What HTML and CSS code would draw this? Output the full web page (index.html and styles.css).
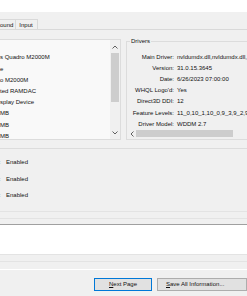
FILE: index.html
```html
<!DOCTYPE html>
<html lang="en">
<head>
  <meta charset="UTF-8">
  <meta name="viewport" content="width=device-width, initial-scale=1.0">
  <title>DirectX Diagnostic Tool</title>
  <link rel="stylesheet" href="styles.css">
</head>
<body>
  <div class="band"></div>

  <div class="tabs">
    <div class="tab first">ound</div>
    <div class="tab">Input</div>
  </div>

  <div class="page">
    <div class="top">
      <div class="device">
        <div class="lines">
          <div>s Quadro M2000M</div>
          <div>e</div>
          <div>o M2000M</div>
          <div>ted RAMDAC</div>
          <div>splay Device</div>
          <div>MB</div>
          <div>MB</div>
          <div>MB</div>
        </div>
        <div class="vscroll">
          <div class="arrow"><svg width="6" height="4" viewBox="0 0 6 4"><polyline points="0.5,3.5 3,1 5.5,3.5" fill="none" stroke="#606060" stroke-width="1"/></svg></div>
          <div class="thumb"></div>
          <div class="arrow down"><svg width="6" height="4" viewBox="0 0 6 4"><polyline points="0.5,0.5 3,3 5.5,0.5" fill="none" stroke="#606060" stroke-width="1"/></svg></div>
        </div>
      </div>

      <fieldset class="drivers">
        <legend>Drivers</legend>
        <div class="drv-grid">
          <span class="k">Main Driver:</span><span>nvldumdx.dll,nvldumdx.dll,</span>
          <span class="k">Version:</span><span>31.0.15.3645</span>
          <span class="k">Date:</span><span>6/26/2023 07:00:00</span>
          <span class="k">WHQL Logo'd:</span><span>Yes</span>
          <span class="k">Direct3D DDI:</span><span>12</span>
          <span class="k">Feature Levels:</span><span>11_0,10_1,10_0,9_3,9_2,9_</span>
          <span class="k">Driver Model:</span><span>WDDM 2.7</span>
        </div>
        <div class="hscroll">
          <div class="harrow"><svg width="4" height="6" viewBox="0 0 4 6"><polyline points="3.5,0.5 1,3 3.5,5.5" fill="none" stroke="#606060" stroke-width="1"/></svg></div>
          <div class="hthumb"></div>
        </div>
      </fieldset>
    </div>

    <div class="features">
      <div class="feat"><span class="colon">:</span><span>Enabled</span></div>
      <div class="feat"><span class="colon">:</span><span>Enabled</span></div>
      <div class="feat"><span class="colon">:</span><span>Enabled</span></div>
    </div>

    <div class="notes">
      <div class="notebox"></div>
    </div>
  </div>

  <div class="buttons">
    <button class="btn default"><u>N</u>ext Page</button>
    <button class="btn save"><u>S</u>ave All Information...</button>
  </div>
</body>
</html>
```

FILE: styles.css
```css
body {
  margin: 0;
  width: 247px;
  height: 296px;
  overflow: hidden;
  background: #f0f0f0;
  font-family: "Liberation Sans", Arial, sans-serif;
  font-size: 6px;
  color: #111;
}
.band {
  height: 12px;
  background: #fff;
}
.tabs {
  display: flex;
  height: 10px;
  margin-top: 7px;
  border-bottom: 1px solid #d9d9d9;
}
.tab {
  height: 9px;
  line-height: 10px;
  border: 1px solid #d9d9d9;
  border-bottom: none;
  border-left: none;
  padding: 0 4px 0 3px;
}
.tab.first {
  padding: 0 2px 0 0;
}
.page {
  border-bottom: 1px solid #fff;
}
.top {
  display: flex;
  height: 101px;
  margin-top: 9px;
}
.device {
  display: flex;
  width: 120px;
  border: 1px solid #dcdcdc;
  border-left: none;
  background: #f9f9f9;
}
.lines {
  flex: 1;
  padding-top: 12.4px;
  line-height: 11.2px;
  white-space: nowrap;
  overflow: hidden;
}
.vscroll {
  width: 10px;
  display: flex;
  flex-direction: column;
  background: #f0f0f0;
}
.arrow {
  height: 13px;
  display: flex;
  align-items: center;
  justify-content: center;
}
.arrow.down {
  margin-top: auto;
  height: 12px;
}
.thumb {
  height: 49px;
  margin: 0 1px;
  background: #cdcdcd;
}
.drivers {
  flex: 1;
  min-width: 0;
  margin: 0 0 0 5px;
  padding: 0;
  border: 1px solid #dcdcdc;
  border-right: none;
  display: flex;
  flex-direction: column;
}
.drivers legend {
  margin-left: 3px;
  padding: 0 1px;
  line-height: 4px;
}
.drv-grid {
  flex: 1;
  display: grid;
  grid-template-columns: 47px auto;
  column-gap: 3px;
  align-content: start;
  padding-top: 8.5px;
  line-height: 11.2px;
  white-space: nowrap;
  overflow: hidden;
}
.k {
  text-align: right;
}
.hscroll {
  display: flex;
  align-items: center;
  height: 11px;
  background: #f0f0f0;
}
.harrow {
  width: 9px;
  display: flex;
  justify-content: center;
}
.hthumb {
  width: 97px;
  height: 7px;
  background: #cdcdcd;
}
.features {
  margin-top: 8px;
  padding: 5px 0 7.5px;
  border-top: 1px solid #dcdcdc;
  border-bottom: 1px solid #e3e3e3;
}
.feat {
  display: flex;
  line-height: 16.5px;
}
.colon {
  width: 7px;
  margin-left: -1px;
  color: #5a86c0;
}
.notes {
  margin: 6px 0 7px;
  padding: 5px 0 6px;
  border-top: 1px solid #e3e3e3;
  border-bottom: 1px solid #e3e3e3;
}
.notebox {
  height: 29px;
  background: #fff;
  border-top: 1px solid #a0a0a0;
  border-bottom: 1px solid #e3e3e3;
}
.buttons {
  display: flex;
  gap: 5px;
  margin-top: 8px;
  padding-left: 94px;
}
.btn {
  height: 13px;
  padding: 0;
  font-family: inherit;
  font-size: 6px;
  color: #111;
  background: #e1e1e1;
  border: 1px solid #adadad;
  line-height: 11px;
}
.btn.default {
  width: 78px;
  border-color: #0078d7;
}
.btn.save {
  width: 90px;
  flex-shrink: 0;
  text-align: left;
  padding-left: 8px;
}
```
